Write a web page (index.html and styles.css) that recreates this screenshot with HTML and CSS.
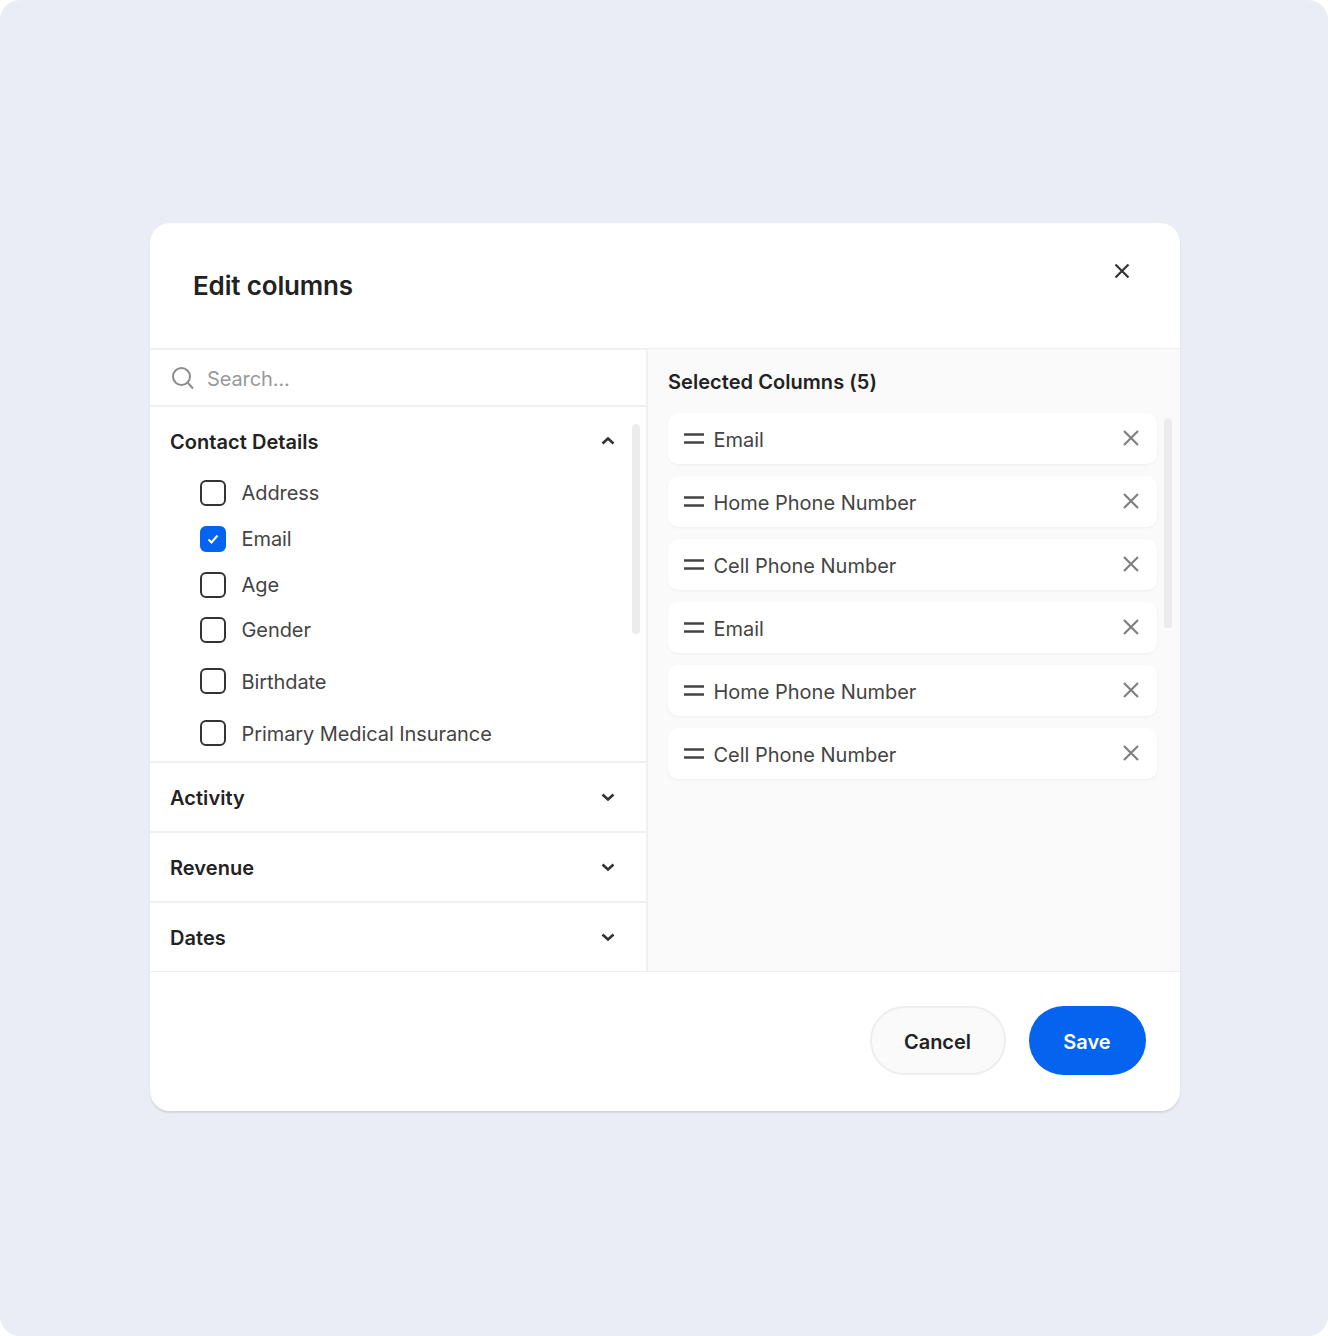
FILE: index.html
```html
<!DOCTYPE html>
<html lang="en">
<head>
  <meta charset="UTF-8">
  <title>Edit columns</title>
  <link rel="stylesheet" href="styles.css">
</head>
<body>
  <div class="modal">
    <div class="modal-head">
      <h1>Edit columns</h1>
      <svg class="close" width="24" height="24" viewBox="0 0 24 24"><path d="M5.5 5.5l13 13M18.500 5.500l-13 13"/></svg>
    </div>

    <div class="modal-body">
      <div class="left">
        <div class="search">
          <svg width="26" height="26" viewBox="0 0 26 26"><circle cx="11.500" cy="10.500" r="8.500"/><path d="M17.500 16.500l5.500 6"/></svg>
          <span>Search...</span>
        </div>

        <div class="group group-open">
          <div class="group-head">
            <span>Contact Details</span>
            <svg class="chev" width="16" height="16" viewBox="0 0 16 16"><path d="M2.500 10.500L8 5.500l5.500 5"/></svg>
          </div>
          <label class="check"><i class="box"></i>Address</label>
          <label class="check"><i class="box box-on"><svg width="14" height="14" viewBox="0 0 14 14"><path d="M2.500 7.500l3 3 6-7"/></svg></i>Email</label>
          <label class="check"><i class="box"></i>Age</label>
          <label class="check check-short"><i class="box"></i>Gender</label>
          <label class="check check-wide check-gap"><i class="box"></i>Birthdate</label>
          <label class="check check-wide"><i class="box"></i>Primary Medical Insurance</label>
        </div>

        <div class="group">
          <div class="group-head">
            <span>Activity</span>
            <svg class="chev" width="16" height="16" viewBox="0 0 16 16"><path d="M2.500 5.500L8 10.500l5.500-5"/></svg>
          </div>
        </div>
        <div class="group">
          <div class="group-head">
            <span>Revenue</span>
            <svg class="chev" width="16" height="16" viewBox="0 0 16 16"><path d="M2.500 5.500L8 10.500l5.500-5"/></svg>
          </div>
        </div>
        <div class="group group-last">
          <div class="group-head">
            <span>Dates</span>
            <svg class="chev" width="16" height="16" viewBox="0 0 16 16"><path d="M2.500 5.500L8 10.500l5.500-5"/></svg>
          </div>
        </div>
        <div class="scroll scroll-left"></div>
      </div>

      <div class="right">
        <h3>Selected Columns (5)</h3>
        <ul class="cols">
          <li><svg class="drag" width="22" height="12" viewBox="0 0 22 12"><path d="M1 1.500h20M1 9.500h20"/></svg><span>Email</span><svg class="rm" width="20" height="20" viewBox="0 0 20 20"><path d="M3 2l14 14M17 2L3 16"/></svg></li>
          <li><svg class="drag" width="22" height="12" viewBox="0 0 22 12"><path d="M1 1.500h20M1 9.500h20"/></svg><span>Home Phone Number</span><svg class="rm" width="20" height="20" viewBox="0 0 20 20"><path d="M3 2l14 14M17 2L3 16"/></svg></li>
          <li><svg class="drag" width="22" height="12" viewBox="0 0 22 12"><path d="M1 1.500h20M1 9.500h20"/></svg><span>Cell Phone Number</span><svg class="rm" width="20" height="20" viewBox="0 0 20 20"><path d="M3 2l14 14M17 2L3 16"/></svg></li>
          <li><svg class="drag" width="22" height="12" viewBox="0 0 22 12"><path d="M1 1.500h20M1 9.500h20"/></svg><span>Email</span><svg class="rm" width="20" height="20" viewBox="0 0 20 20"><path d="M3 2l14 14M17 2L3 16"/></svg></li>
          <li><svg class="drag" width="22" height="12" viewBox="0 0 22 12"><path d="M1 1.500h20M1 9.500h20"/></svg><span>Home Phone Number</span><svg class="rm" width="20" height="20" viewBox="0 0 20 20"><path d="M3 2l14 14M17 2L3 16"/></svg></li>
          <li><svg class="drag" width="22" height="12" viewBox="0 0 22 12"><path d="M1 1.500h20M1 9.500h20"/></svg><span>Cell Phone Number</span><svg class="rm" width="20" height="20" viewBox="0 0 20 20"><path d="M3 2l14 14M17 2L3 16"/></svg></li>
        </ul>
        <div class="scroll scroll-right"></div>
      </div>
    </div>

    <div class="modal-foot">
      <button class="btn btn-cancel">Cancel</button>
      <button class="btn btn-save">Save</button>
    </div>
  </div>
</body>
</html>
```

FILE: styles.css
```css
* { box-sizing: border-box; }
html { background: #fff; }
body { margin: 0; height: 1336px; padding-top: 223px; background: #eaedf5; border-radius: 20px; font-family: Inter, "Liberation Sans", sans-serif; color: #222; overflow: hidden; }
svg { display: block; fill: none; }

.modal { width: 1030px; height: 888px; margin-left: 150px; background: #fff; border-radius: 20px; box-shadow: 0 2px 2px rgba(0,0,0,0.1); display: flex; flex-direction: column; }
.modal-head { height: 127px; flex: none; border-bottom: 2px solid #f0f0f0; display: flex; justify-content: space-between; align-items: flex-start; padding: 36px 46px 0 43px; }
.modal-head h1 { margin: 12px 0 0; font-size: 26px; line-height: 30px; font-weight: 600; letter-spacing: -0.15px; }
.close path { stroke: #333; stroke-width: 2.2; }

.modal-body { height: 623px; flex: none; display: flex; border-bottom: 1px solid #eee; margin-top: -1px; }
.left { width: 498px; flex: none; border-right: 2px solid #f0f0f0; position: relative; }
.right { flex: 1; background: #fafafa; padding: 21px 23px 0 20px; position: relative; }

.search { height: 57px; border-bottom: 2px solid #f0f0f0; display: flex; align-items: center; gap: 11px; padding: 2px 0 0 20px; margin-top: 1px; font-size: 20px; color: #999; letter-spacing: -0.1px; }
.search svg { stroke: #8c8c8c; stroke-width: 2; }

.group { height: 70px; border-bottom: 2px solid #f0f0f0; }
.group-last { border-bottom: none; }
.group-open { height: 356px; }
.group-head { height: 70px; display: flex; justify-content: space-between; align-items: center; padding: 0 30px 2px 20px; font-size: 20px; font-weight: 600; letter-spacing: 0.05px; }
.group-head span { padding-top: 2px; }
.group-open .group-head { height: 63px; padding: 4px 30px 0 20px; }
.chev path { stroke: #333; stroke-width: 2.6; }

.check { display: flex; align-items: center; gap: 15.500px; height: 46px; padding-left: 50px; font-size: 20px; color: #444; letter-spacing: -0.08px; }
.check-short { height: 44px; }
.check-wide { height: 52px; }
.check-wide .box { margin-top: -2px; }
.check-gap { margin-top: 4px; }
.box { width: 26px; height: 26px; border: 2.5px solid #333; border-radius: 6px; display: flex; align-items: center; justify-content: center; }
.box-on { background: #0464f0; border-color: #0464f0; }
.box-on path { stroke: #fff; stroke-width: 2; }

.scroll { position: absolute; width: 8px; height: 210px; background: #ececec; border-radius: 4px; }
.scroll-left { left: 482px; top: 75px; }
.scroll-right { left: 516px; top: 69px; }

.right h3 { margin: 0 0 18px; font-size: 20px; line-height: 25px; font-weight: 600; letter-spacing: 0.05px; }
.cols { list-style: none; margin: 0; padding: 0; display: flex; flex-direction: column; gap: 12px; }
.cols li { height: 51px; width: 489px; background: #fff; border-radius: 10px; box-shadow: 0 1px 3px rgba(0,0,0,0.05); display: flex; align-items: center; padding: 0 16px 0 15px; font-size: 20px; color: #444; letter-spacing: -0.02px; }
.cols li span { flex: 1; margin-left: 8.500px; padding-top: 2px; }
.drag path { stroke: #444; stroke-width: 2.5; }
.rm path { stroke: #808080; stroke-width: 2.2; }

.modal-foot { flex: 1; display: flex; justify-content: flex-end; align-items: flex-start; gap: 23px; padding: 34px 34px 0 0; }
.btn { height: 69px; padding: 2px 1px 0 0; border-radius: 35px; font-family: inherit; font-size: 20px; font-weight: 600; }
.btn-cancel { width: 136px; background: #fafafa; border: 2px solid #eee; color: #222; }
.btn-save { width: 117px; background: #0464f0; border: none; color: #fff; }
```
